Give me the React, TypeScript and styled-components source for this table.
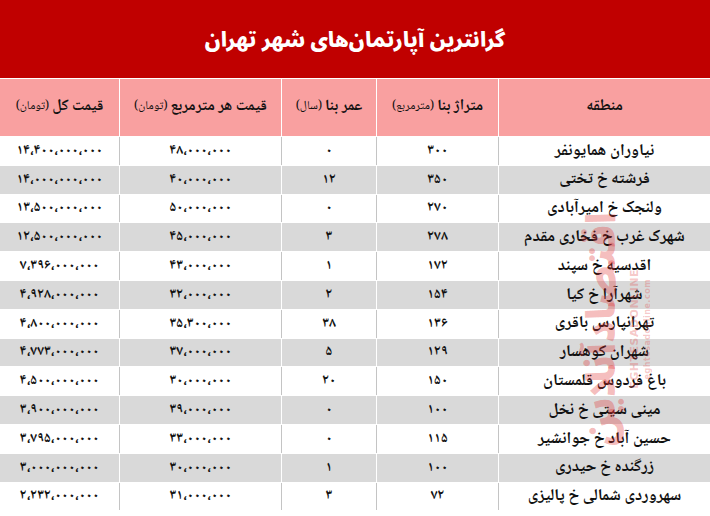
import React from "react";
import styled, { createGlobalStyle } from "styled-components";

const Global = createGlobalStyle`
  html, body { margin: 0; padding: 0; background: #ffffff; }
  body { font-family: "Noto Naskh Arabic", "DejaVu Sans", sans-serif; }
`;

const Page = styled.div`
  position: relative;
  width: 710px;
  height: 516px;
  overflow: hidden;
  background: #ffffff;
  display: flex;
  flex-direction: column;
  gap: 1px;
  direction: rtl;
`;

const TitleBar = styled.div`
  height: 78px;
  background: #c00000;
  display: flex;
  align-items: center;
  justify-content: center;
  padding-top: 4px;
  box-sizing: border-box;
`;

const Title = styled.h1`
  margin: 0;
  color: #ffffff;
  font-family: "Noto Sans Arabic", "DejaVu Sans", sans-serif;
  font-weight: 900;
  font-size: 20.5px;
  line-height: 1.2;
`;

const cols = "211px 121px 94px 161px 119px";

const Row = styled.div<{ $sep: string; $h: number }>`
  display: grid;
  grid-template-columns: ${cols};
  gap: 1px;
  background: ${(p) => p.$sep};
  height: ${(p) => p.$h}px;
`;

const Cell = styled.div<{ $bg: string }>`
  background: ${(p) => p.$bg};
  display: flex;
  align-items: center;
  justify-content: center;
  font-family: "Noto Naskh Arabic", "DejaVu Sans", sans-serif;
  font-weight: 700;
  font-size: 14px;
  line-height: 1;
  color: #111111;
  white-space: nowrap;
`;

const HeadCell = styled(Cell)`
  font-size: 15.5px;
  padding-bottom: 2px;
`;

const Small = styled.span`
  font-weight: 400;
  font-size: 12px;
  margin-right: 3px;
`;

const NameText = styled.span`
  font-size: 16.5px;
`;

const Watermark = styled.div`
  position: absolute;
  left: 580px;
  top: 224px;
  width: 80px;
  height: 210px;
  pointer-events: none;
  display: flex;
  flex-direction: row;
  align-items: center;
  gap: 2px;
  direction: ltr;
`;

const WmLogo = styled.div`
  writing-mode: vertical-rl;
  transform: rotate(180deg);
  font-family: "Noto Sans Arabic", "DejaVu Sans", sans-serif;
  font-weight: 900;
  font-size: 40px;
  line-height: 46px;
  color: rgba(225, 50, 50, 0.32);
  direction: rtl;
`;

const WmText = styled.div<{ $size: number }>`
  writing-mode: vertical-rl;
  transform: rotate(180deg);
  font-family: "DejaVu Sans", sans-serif;
  font-weight: bold;
  font-size: ${(p) => p.$size}px;
  color: rgba(225, 70, 70, 0.3);
  letter-spacing: 0.5px;
`;

type Item = [string, string, string, string, string];

const data: Item[] = [
  ["نیاوران همایونفر", "۳۰۰", "۰", "۴۸،۰۰۰،۰۰۰", "۱۴،۴۰۰،۰۰۰،۰۰۰"],
  ["فرشته خ تختی", "۳۵۰", "۱۲", "۴۰،۰۰۰،۰۰۰", "۱۴،۰۰۰،۰۰۰،۰۰۰"],
  ["ولنجک خ امیرآبادی", "۲۷۰", "۰", "۵۰،۰۰۰،۰۰۰", "۱۳،۵۰۰،۰۰۰،۰۰۰"],
  ["شهرک غرب خ فخاری مقدم", "۲۷۸", "۳", "۴۵،۰۰۰،۰۰۰", "۱۲،۵۰۰،۰۰۰،۰۰۰"],
  ["اقدسیه خ سپند", "۱۷۲", "۱", "۴۳،۰۰۰،۰۰۰", "۷،۳۹۶،۰۰۰،۰۰۰"],
  ["شهرآرا خ کیا", "۱۵۴", "۲", "۳۲،۰۰۰،۰۰۰", "۴،۹۲۸،۰۰۰،۰۰۰"],
  ["تهرانپارس باقری", "۱۳۶", "۳۸", "۳۵،۳۰۰،۰۰۰", "۴،۸۰۰،۰۰۰،۰۰۰"],
  ["شهران کوهسار", "۱۲۹", "۵", "۳۷،۰۰۰،۰۰۰", "۴،۷۷۳،۰۰۰،۰۰۰"],
  ["باغ فردوس قلمستان", "۱۵۰", "۲۰", "۳۰،۰۰۰،۰۰۰", "۴،۵۰۰،۰۰۰،۰۰۰"],
  ["مینی سیتی خ نخل", "۱۰۰", "۰", "۳۹،۰۰۰،۰۰۰", "۳،۹۰۰،۰۰۰،۰۰۰"],
  ["حسین آباد خ جوانشیر", "۱۱۵", "۰", "۳۳،۰۰۰،۰۰۰", "۳،۷۹۵،۰۰۰،۰۰۰"],
  ["زرگنده خ حیدری", "۱۰۰", "۱", "۳۰،۰۰۰،۰۰۰", "۳،۰۰۰،۰۰۰،۰۰۰"],
  ["سهروردی شمالی خ پالیزی", "۷۲", "۳", "۳۱،۰۰۰،۰۰۰", "۲،۲۳۲،۰۰۰،۰۰۰"],
];

const PINK = "#f9a0a0";

export default function App() {
  return (
    <>
      <Global />
      <Page>
        <TitleBar>
          <Title>گرانترین آپارتمان‌های شهر تهران</Title>
        </TitleBar>
        <Row $sep="#ffffff" $h={57}>
          <HeadCell $bg={PINK}>منطقه</HeadCell>
          <HeadCell $bg={PINK}>
            متراژ بنا<Small>(مترمربع)</Small>
          </HeadCell>
          <HeadCell $bg={PINK}>
            عمر بنا<Small>(سال)</Small>
          </HeadCell>
          <HeadCell $bg={PINK}>
            قیمت هر مترمربع<Small>(تومان)</Small>
          </HeadCell>
          <HeadCell $bg={PINK}>
            قیمت کل<Small>(تومان)</Small>
          </HeadCell>
        </Row>
        {data.map((r, i) => {
          const grey = i % 2 === 1;
          const bg = grey ? "#d9d9d9" : "#ffffff";
          const sep = grey ? "#ffffff" : "#c4c4c4";
          return (
            <Row key={i} $sep={sep} $h={27.8}>
              <Cell $bg={bg}>
                <NameText>{r[0]}</NameText>
              </Cell>
              <Cell $bg={bg}>{r[1]}</Cell>
              <Cell $bg={bg}>{r[2]}</Cell>
              <Cell $bg={bg}>{r[3]}</Cell>
              <Cell $bg={bg}>{r[4]}</Cell>
            </Row>
          );
        })}
        <Watermark>
          <WmLogo>اقتصادآنلاین</WmLogo>
          <WmText $size={11}>EGHTESADONLINE</WmText>
          <WmText $size={8}>eghtesadonline.com</WmText>
        </Watermark>
      </Page>
    </>
  );
}
